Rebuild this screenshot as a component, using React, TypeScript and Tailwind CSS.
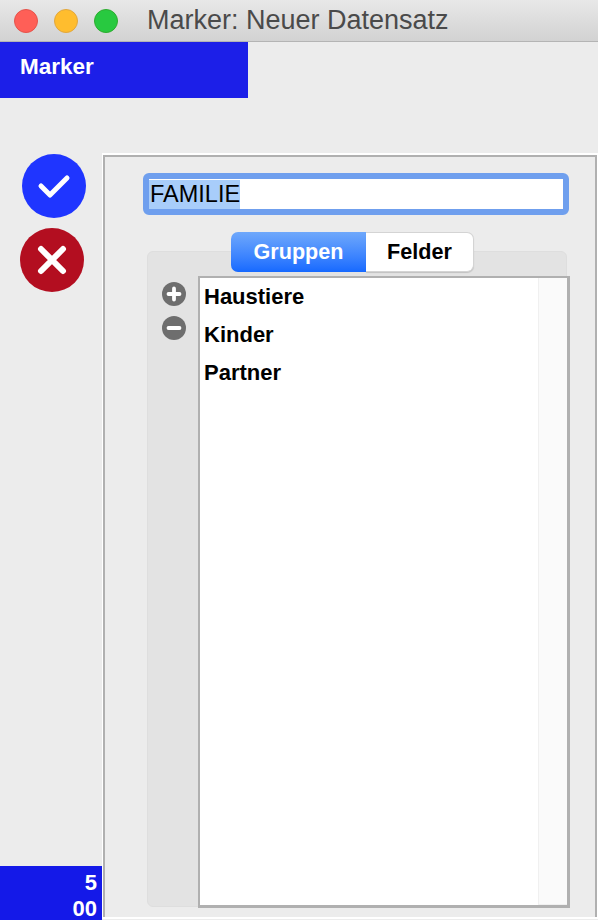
import React from 'react';

const GROUPS = ['Haustiere', 'Kinder', 'Partner'];

function RoundIcon({ kind }: { kind: 'plus' | 'minus' }) {
  return (
    <svg width="24" height="24" viewBox="0 0 24 24" className="block">
      <circle cx="12" cy="12" r="12" fill="#6e6e6e" />
      {kind === 'plus' ? (
        <path d="M12 6.5v11M6.5 12h11" stroke="#fff" strokeWidth="3.8" strokeLinecap="round" />
      ) : (
        <path d="M6.5 12h11" stroke="#fff" strokeWidth="3.8" strokeLinecap="round" />
      )}
    </svg>
  );
}

export default function App() {
  return (
    <div className="w-[598px] h-[920px] flex flex-col overflow-hidden bg-[#ececec] font-['Liberation_Sans',Arial,sans-serif] select-none">
      {/* Window title bar */}
      <div className="h-[42px] shrink-0 flex items-center pl-[14px] bg-gradient-to-b from-[#e8e8e8] to-[#d2d2d2] border-b border-[#b4b4b4]">
        <div className="w-6 h-6 rounded-full bg-[#ff5f57] border border-[#e5534b]" />
        <div className="w-6 h-6 rounded-full bg-[#ffbd2e] border border-[#e1a73e] ml-4" />
        <div className="w-6 h-6 rounded-full bg-[#28c940] border border-[#2dac2f] ml-4" />
        <span className="ml-[29px] text-[27px] leading-none text-[#4a4a4a]">Marker: Neuer Datensatz</span>
      </div>

      {/* Header */}
      <div className="h-[56px] shrink-0 w-[248px] bg-[#1c1fe8] flex items-center pl-5 pb-[6px]">
        <span className="text-[22.5px] font-bold text-white">Marker</span>
      </div>

      <div className="flex-1 flex min-h-0">
        {/* Left column */}
        <div className="w-[102px] shrink-0 flex flex-col">
          <button className="mt-[56px] ml-[22px] w-16 h-16 rounded-full bg-[#1f35ff] flex items-center justify-center">
            <svg width="36" height="30" viewBox="0 0 36 30">
              <path d="M5 15l9 9L31 7" fill="none" stroke="#fff" strokeWidth="5" strokeLinecap="round" strokeLinejoin="round" />
            </svg>
          </button>
          <button className="mt-[10px] ml-5 w-16 h-16 rounded-full bg-[#b30e20] flex items-center justify-center">
            <svg width="36" height="36" viewBox="0 0 36 36">
              <path d="M7 7l22 22M29 7L7 29" fill="none" stroke="#fff" strokeWidth="6" strokeLinecap="round" />
            </svg>
          </button>
          <div className="mt-auto h-[54px] bg-[#1419e8] pr-[5px] text-right text-[22px] leading-[26px] font-bold text-white pt-1">
            <div>5</div>
            <div>00</div>
          </div>
        </div>

        {/* Main panel */}
        <div className="flex-1 mt-[55px] mb-px border-2 border-x border-white">
          <div className="h-full border-2 border-b-0 border-[#b0b0b0] flex flex-col">
            <div className="mt-4 ml-[38px] w-[426px] h-[42px] shrink-0 rounded-[6px] border-[6px] border-[#6f9fee] bg-white flex items-center">
              <span className="bg-[#a8cdfa] text-[23.5px] leading-[29px] text-black pl-px">FAMILIE</span>
            </div>

            <div className="mt-9 ml-[42px] w-[420px] h-[656px] shrink-0 flex flex-col rounded-[6px] border border-[#dedede] bg-[#e3e3e3]">
              {/* Tabs */}
              <div className="-mt-5 ml-[83px] flex h-10 shrink-0 text-[21.6px] font-bold">
                <div className="w-[135px] pt-px rounded-l-[7px] bg-gradient-to-b from-[#6fa8fb] to-[#1669ff] text-white flex items-center justify-center">Gruppen</div>
                <div className="w-[108px] pt-px rounded-r-[7px] bg-white text-black border border-l-0 border-[#d4d4d4] shadow-[0_1px_1px_rgba(0,0,0,0.15)] flex items-center justify-center">Felder</div>
              </div>

              <div className="flex-1 flex mt-1 -mr-[4px] -mb-[2px] min-h-0">
                <div className="w-[50px] shrink-0 flex flex-col pl-[14px] pt-[6px] gap-[10px]">
                  <RoundIcon kind="plus" />
                  <RoundIcon kind="minus" />
                </div>
                <div className="flex-1 flex bg-white border-[3px] border-t-2 border-l-2 border-[#b0b0b0]">
                  <div className="flex-1 pl-1 text-[22px] font-bold text-black">
                    {GROUPS.map((g) => (
                      <div key={g} className="h-[38px] leading-[38px]">{g}</div>
                    ))}
                  </div>
                  <div className="w-[29px] bg-[#fafafa] border-l border-b border-[#f0f0f0]" />
                </div>
              </div>
            </div>
          </div>
        </div>
      </div>
    </div>
  );
}
